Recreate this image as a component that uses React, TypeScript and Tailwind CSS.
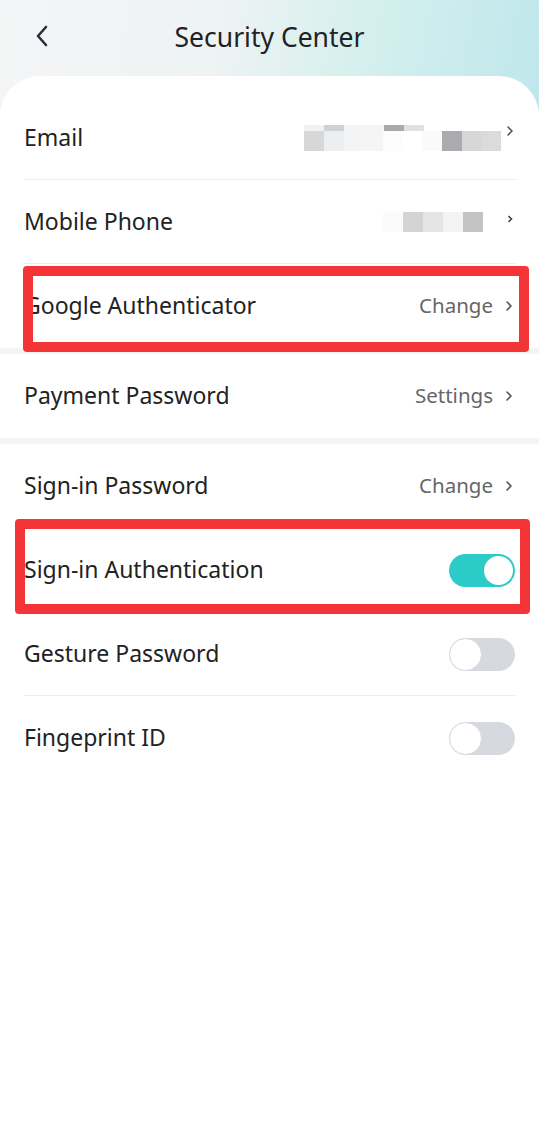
import React from "react";

const font = { fontFamily: '"Noto Sans", Roboto, Arial, sans-serif' };

function Chevron({ className = "" }: { className?: string }) {
  return (
    <svg width="8" height="12" viewBox="0 0 8 12" className={className}>
      <path d="M2 2 L6 6 L2 10" fill="none" stroke="#555" strokeWidth="1.6" strokeLinecap="round" strokeLinejoin="round" />
    </svg>
  );
}

function Toggle({ on }: { on: boolean }) {
  return on ? (
    <div className="w-[66px] h-[33px] rounded-full bg-[#2ccbc8] flex items-center justify-end p-[2px]">
      <div className="w-[29px] h-[29px] rounded-full bg-white" />
    </div>
  ) : (
    <div className="w-[66px] h-[33px] rounded-full bg-[#d6dae0] flex items-center justify-start">
      <div className="w-[33px] h-[33px] rounded-full bg-white border border-[#d6dae0]" />
    </div>
  );
}

function Row({ label, right, divider = false }: { label: string; right?: React.ReactNode; divider?: boolean }) {
  return (
    <div className="relative h-[84px] flex items-center justify-between pl-[24px] pr-[26px]">
      <span className="text-[23px] text-[#222] -mt-[2px]">{label}</span>
      {right}
      {divider && <div className="absolute bottom-0 left-[24px] right-[23px] h-px bg-[#eeeeee]" />}
    </div>
  );
}

function Value({ text }: { text: string }) {
  return (
    <div className="flex items-center gap-[12px]">
      <span className="text-[20.5px] text-[#666] -mt-[2px]">{text}</span>
      <Chevron />
    </div>
  );
}

const emailMain = ["#d6d7d9", "#eceef0", "#f3f4f5", "#f4f5f6", "#fcfcfc", "#ffffff", "#fafafa", "#a9abae", "#d6d7d9", "#dadbdc"];
const emailTop = ["#f2f2f2", "#d0d1d2", "#f4f4f4", "#f5f5f5", "#a9aaac", "#e0e1e2"];
const phone = ["#fbfbfb", "#d3d4d6", "#e3e4e6", "#f3f3f3", "#c2c3c5"];

export default function App() {
  return (
    <div className="w-[539px] h-[1121px] bg-white relative overflow-hidden" style={font}>
      <div className="h-[110px] bg-[linear-gradient(100deg,#f4f5f6_0%,#eef3f3_40%,#d6f0ee_65%,#bfe7ec_100%)]">
        <div className="h-[76px] flex items-center relative">
          <div className="absolute left-[34px] top-[24px]">
            <svg width="16" height="24" viewBox="0 0 16 24">
              <path d="M12 3 L4 12 L12 21" fill="none" stroke="#2b2d3f" strokeWidth="2.6" strokeLinecap="round" strokeLinejoin="round" />
            </svg>
          </div>
          <div className="w-full text-center text-[26.5px] text-[#222] -mt-[1px]">Security Center</div>
        </div>
      </div>
      <div className="absolute top-[76px] left-0 right-0 bottom-0 bg-white rounded-t-[40px] pt-[20px]">
        <Row
          label="Email"
          divider
          right={
            <div className="flex items-center gap-[5px] -mr-[1px]">
              <div className="flex flex-col">
                <div className="flex">
                  {emailTop.map((c, i) => (
                    <div key={i} className="w-[20px] h-[6px]" style={{ background: c }} />
                  ))}
                </div>
                <div className="flex">
                  {emailMain.map((c, i) => (
                    <div key={i} className="w-[19.7px] h-[20px]" style={{ background: c }} />
                  ))}
                </div>
              </div>
              <Chevron className="-mt-[14px]" />
            </div>
          }
        />
        <Row
          label="Mobile Phone"
          divider
          right={
            <div className="flex items-center gap-[24px]">
              <div className="flex">
                {phone.map((c, i) => (
                  <div key={i} className="w-[20px] h-[20px]" style={{ background: c }} />
                ))}
              </div>
              <svg width="6" height="8" viewBox="0 0 6 8" className="-mt-[6px]">
                <path d="M1.5 1 L4.5 4 L1.5 7" fill="none" stroke="#444" strokeWidth="1.6" />
              </svg>
            </div>
          }
        />
        <Row label="Google Authenticator" right={<Value text="Change" />} />
        <div className="h-[6px] bg-[#f5f5f5]" />
        <Row label="Payment Password" right={<Value text="Settings" />} />
        <div className="h-[6px] bg-[#f5f5f5]" />
        <Row label="Sign-in Password" right={<Value text="Change" />} />
        <Row label="Sign-in Authentication" right={<div className="-mr-[2px]"><Toggle on /></div>} />
        <Row label="Gesture Password" divider right={<div className="-mr-[2px]"><Toggle on={false} /></div>} />
        <Row label="Fingeprint ID" right={<div className="-mr-[2px]"><Toggle on={false} /></div>} />
      </div>
      <div className="absolute left-[23px] top-[266px] w-[506px] h-[86px] border-[10px] border-[#f33538] rounded-[4px]" />
      <div className="absolute left-[15px] top-[519px] w-[515px] h-[95px] border-[10px] border-[#f33538] rounded-[4px]" />
    </div>
  );
}
